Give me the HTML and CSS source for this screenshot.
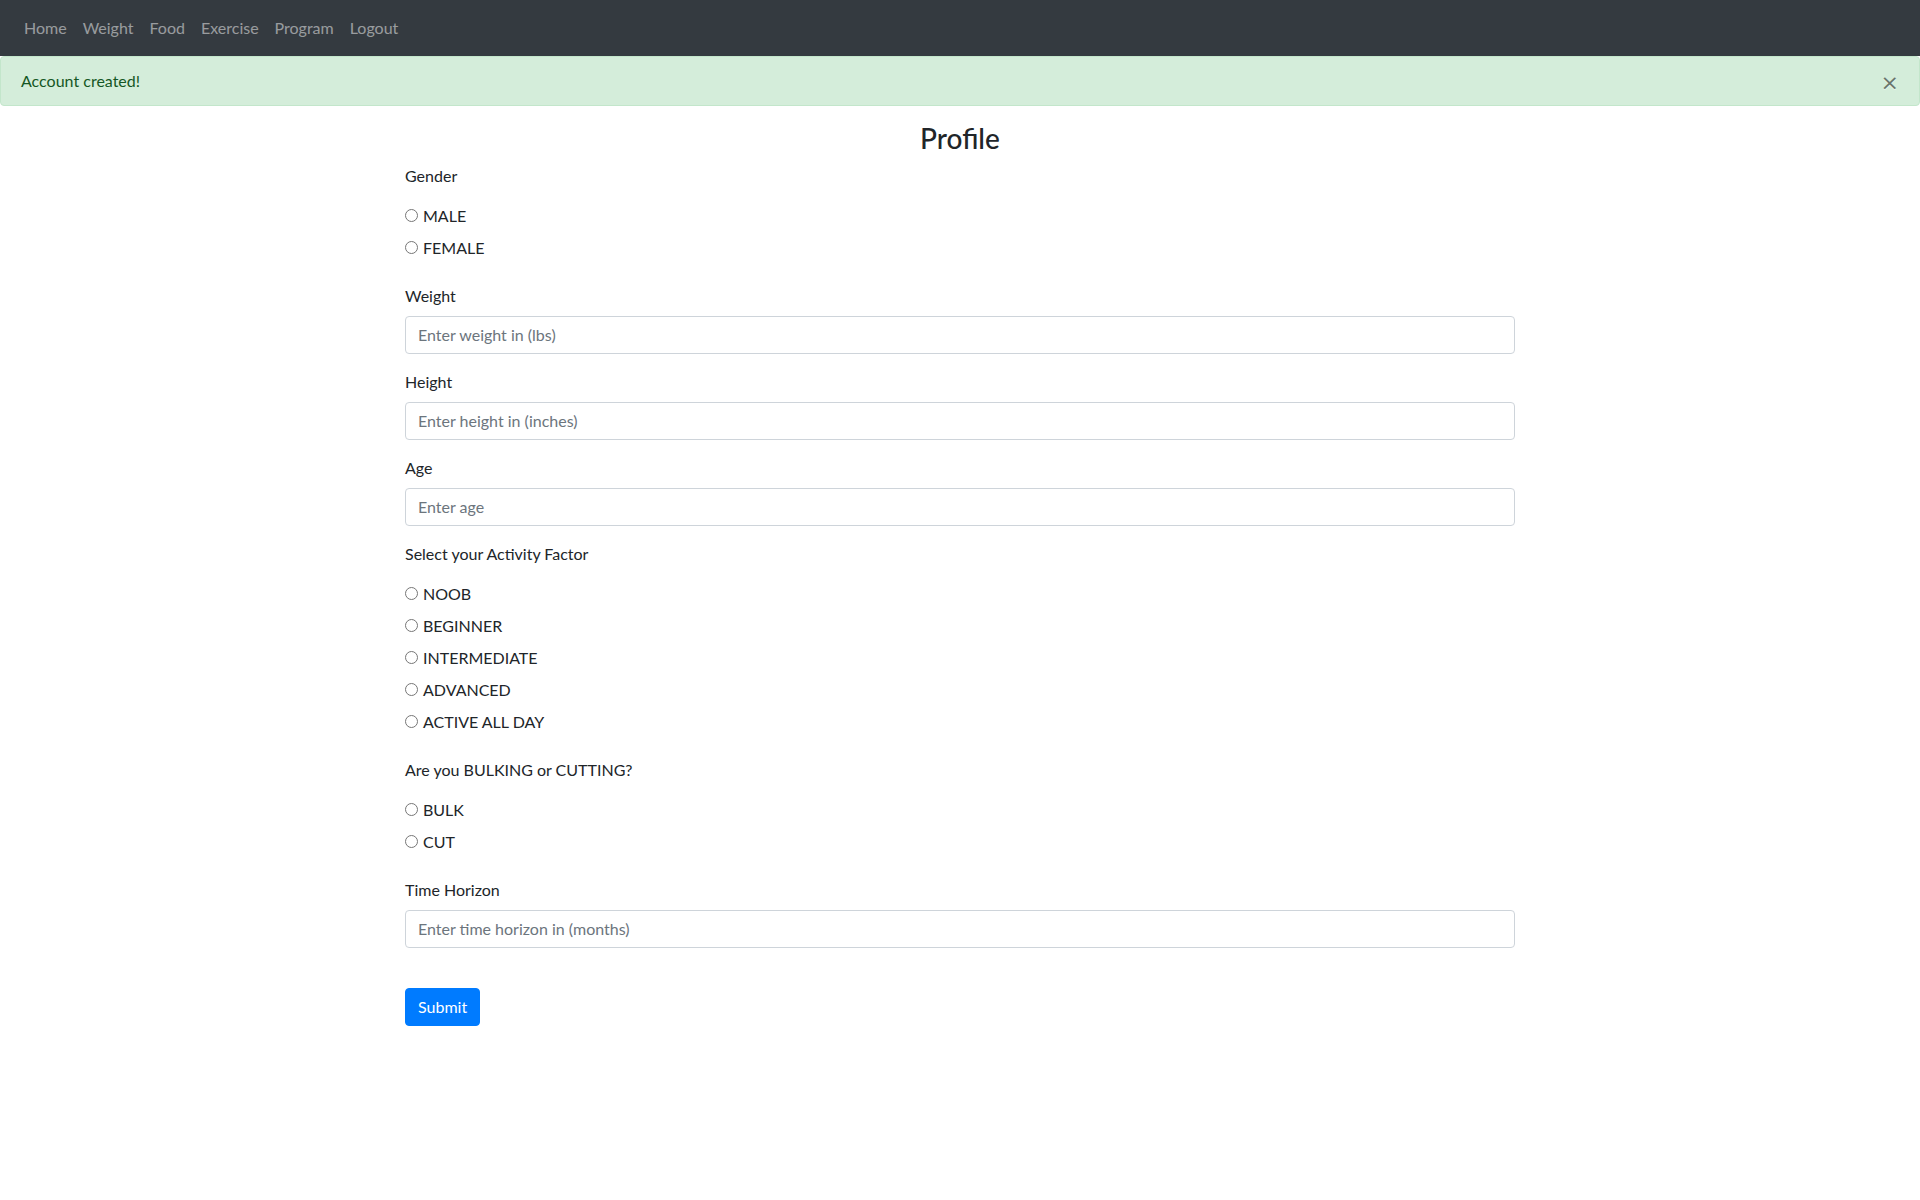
FILE: index.html
```html
<!DOCTYPE html>
<html lang="en">
<head>
<meta charset="utf-8">
<title>Profile</title>
<link rel="stylesheet" href="styles.css">
</head>
<body>
<nav class="navbar">
  <a class="nav-link" href="#">Home</a>
  <a class="nav-link" href="#">Weight</a>
  <a class="nav-link" href="#">Food</a>
  <a class="nav-link" href="#">Exercise</a>
  <a class="nav-link" href="#">Program</a>
  <a class="nav-link" href="#">Logout</a>
</nav>
<div class="alert">
  <span>Account created!</span>
  <button class="close" type="button">&times;</button>
</div>
<main class="container">
  <h3 class="title">Profile</h3>
  <form class="form">
    <div class="form-group">
      <label class="label">Gender</label>
      <div class="radio-list">
        <label class="radio"><input type="radio" name="gender">MALE</label>
        <label class="radio"><input type="radio" name="gender">FEMALE</label>
      </div>
    </div>
    <div class="form-group">
      <label class="label">Weight</label>
      <input class="form-control" type="text" placeholder="Enter weight in (lbs)">
    </div>
    <div class="form-group">
      <label class="label">Height</label>
      <input class="form-control" type="text" placeholder="Enter height in (inches)">
    </div>
    <div class="form-group">
      <label class="label">Age</label>
      <input class="form-control" type="text" placeholder="Enter age">
    </div>
    <div class="form-group">
      <label class="label">Select your Activity Factor</label>
      <div class="radio-list">
        <label class="radio"><input type="radio" name="act">NOOB</label>
        <label class="radio"><input type="radio" name="act">BEGINNER</label>
        <label class="radio"><input type="radio" name="act">INTERMEDIATE</label>
        <label class="radio"><input type="radio" name="act">ADVANCED</label>
        <label class="radio"><input type="radio" name="act">ACTIVE ALL DAY</label>
      </div>
    </div>
    <div class="form-group">
      <label class="label">Are you BULKING or CUTTING?</label>
      <div class="radio-list">
        <label class="radio"><input type="radio" name="goal">BULK</label>
        <label class="radio"><input type="radio" name="goal">CUT</label>
      </div>
    </div>
    <div class="form-group">
      <label class="label">Time Horizon</label>
      <input class="form-control" type="text" placeholder="Enter time horizon in (months)">
    </div>
    <button class="btn-submit" type="submit">Submit</button>
  </form>
</main>
</body>
</html>
```
FILE: styles.css
```css
* { box-sizing: border-box; }
html, body {
  margin: 0;
  padding: 0;
  background: #fff;
}
body {
  font-family: Lato, "Open Sans", "Liberation Sans", sans-serif;
  font-size: 16px;
  line-height: 1.5;
  color: #212529;
}
.navbar {
  display: flex;
  align-items: center;
  height: 56px;
  padding: 8px 16px;
  background: #343a40;
}
.nav-link {
  padding: 8px;
  color: rgba(255, 255, 255, 0.5);
  text-decoration: none;
}
.alert {
  position: relative;
  display: flex;
  align-items: center;
  height: 50px;
  padding: 12px 20px;
  margin-bottom: 16px;
  background: #d4edda;
  border: 1px solid #c3e6cb;
  border-radius: 4px;
  color: #155724;
}
.close {
  position: absolute;
  top: 0;
  right: 0;
  height: 48px;
  padding: 4px 20px 0;
  background: transparent;
  border: 0;
  font-family: "DejaVu Sans", sans-serif;
  font-size: 22px;
  font-weight: 400;
  line-height: 1;
  color: #000;
  opacity: 0.5;
  text-shadow: 0 1px 0 #fff;
}
.container {
  width: 1140px;
  margin: 0 auto;
  padding: 0 15px;
}
.title {
  margin: 0 0 8px;
  text-align: center;
  font-size: 28px;
  font-weight: 500;
  line-height: 1.2;
}
.form-group {
  margin-bottom: 16px;
}
.label {
  display: block;
  margin-bottom: 8px;
}
.radio-list {
  display: flex;
  flex-direction: column;
  gap: 8px;
  padding: 8px 0;
}
.radio {
  display: flex;
  align-items: center;
  height: 24px;
}
.radio input {
  width: 13px;
  height: 13px;
  margin: 0 5px 1px 0;
}
.form-control {
  display: block;
  width: 100%;
  height: 38px;
  padding: 6px 12px;
  font-family: inherit;
  font-size: 16px;
  line-height: 1.5;
  color: #495057;
  background: #fff;
  border: 1px solid #ced4da;
  border-radius: 4px;
}
.form-control::placeholder {
  color: #6c757d;
  opacity: 1;
}
.btn-submit {
  display: inline-block;
  margin-top: 24px;
  height: 38px;
  padding: 6px 12px;
  font-family: inherit;
  font-size: 16px;
  line-height: 1.5;
  color: #fff;
  background: #007bff;
  border: 1px solid #007bff;
  border-radius: 4px;
}
```
